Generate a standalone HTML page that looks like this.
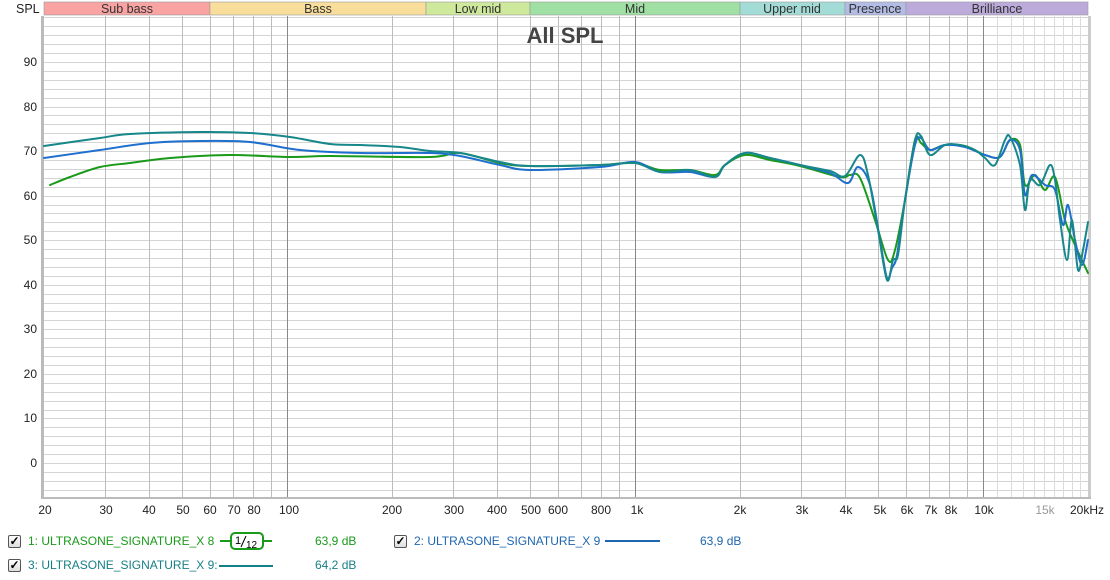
<!DOCTYPE html>
<html><head><meta charset="utf-8"><style>
body{margin:0;background:#fff;width:1110px;height:580px;overflow:hidden;font-family:"Liberation Sans",sans-serif;}
svg{position:absolute;left:0;top:0}
.lg{position:absolute;font-size:12px;white-space:nowrap}
.cb{position:absolute;width:11px;height:11px;border:1px solid #555;background:linear-gradient(#fff,#ddd);border-radius:2px;font-size:12px;font-weight:bold;line-height:11px;text-align:center;color:#000}
</style></head><body>
<svg id="s" width="1110" height="580" font-family="Liberation Sans, sans-serif">
<g id="bands" font-size="12.5" fill="#333">
<rect x="44" y="2" width="166" height="13" fill="#f9a3a3" stroke="#999" stroke-width="0.6"/>
<rect x="210" y="2" width="216" height="13" fill="#f8de9a" stroke="#999" stroke-width="0.6"/>
<rect x="426" y="2" width="104" height="13" fill="#cfe99c" stroke="#999" stroke-width="0.6"/>
<rect x="530" y="2" width="210" height="13" fill="#a0e0a4" stroke="#999" stroke-width="0.6"/>
<rect x="740" y="2" width="105" height="13" fill="#a3dcd6" stroke="#999" stroke-width="0.6"/>
<rect x="845" y="2" width="61" height="13" fill="#b2bce4" stroke="#999" stroke-width="0.6"/>
<rect x="906" y="2" width="182" height="13" fill="#bcaadb" stroke="#999" stroke-width="0.6"/>
<text x="127" y="13" text-anchor="middle">Sub bass</text>
<text x="318" y="13" text-anchor="middle">Bass</text>
<text x="478" y="13" text-anchor="middle">Low mid</text>
<text x="635" y="13" text-anchor="middle">Mid</text>
<text x="792" y="13" text-anchor="middle">Upper mid</text>
<text x="875" y="13" text-anchor="middle">Presence</text>
<text x="997" y="13" text-anchor="middle">Brilliance</text>
</g>
<text x="16" y="13" font-size="12.5" fill="#222">SPL</text>
<rect x="41" y="16" width="3" height="482" fill="#bbb"/>
<rect x="1088" y="16" width="3" height="482" fill="#ccc"/>
<rect x="41" y="497" width="1050" height="2" fill="#bbb"/>
<g id="grid"></g>
<g font-size="12" fill="#222" text-anchor="end">
<text x="37" y="66">90</text><text x="37" y="111">80</text><text x="37" y="155">70</text><text x="37" y="200">60</text><text x="37" y="244">50</text><text x="37" y="289">40</text><text x="37" y="333">30</text><text x="37" y="378">20</text><text x="37" y="422">10</text><text x="37" y="467">0</text>
</g>
<g font-size="12" fill="#222" text-anchor="middle">
<text x="45" y="514">20</text><text x="106" y="514">30</text><text x="149" y="514">40</text><text x="183" y="514">50</text><text x="210" y="514">60</text><text x="234" y="514">70</text><text x="254" y="514">80</text><text x="289" y="514">100</text><text x="392" y="514">200</text><text x="454" y="514">300</text><text x="497" y="514">400</text><text x="531" y="514">500</text><text x="558" y="514">600</text><text x="601" y="514">800</text><text x="637" y="514">1k</text><text x="740" y="514">2k</text><text x="802" y="514">3k</text><text x="846" y="514">4k</text><text x="880" y="514">5k</text><text x="907" y="514">6k</text><text x="931" y="514">7k</text><text x="951" y="514">8k</text><text x="984" y="514">10k</text><text x="1045" y="514" fill="#999">15k</text><text x="1087" y="514">20kHz</text>
</g>
<text x="565" y="43" font-size="22" font-weight="bold" fill="#444" text-anchor="middle">All SPL</text>
<g id="curves" fill="none" stroke-width="2" stroke-linejoin="round" stroke-linecap="round"></g>
<line x1="220" y1="541" x2="272" y2="541" stroke="#1a9a1a" stroke-width="2"/>
<rect x="231" y="533" width="32" height="16" rx="4" fill="#fff" stroke="#1a9a1a" stroke-width="2"/>
<text x="235" y="544" font-size="11" fill="#000">1</text><line x1="246" y1="536" x2="241" y2="547" stroke="#000" stroke-width="1"/><text x="246" y="548" font-size="10" fill="#000">12</text>
<line x1="605" y1="541" x2="660" y2="541" stroke="#1f66b0" stroke-width="2"/>
<line x1="219" y1="566" x2="273" y2="566" stroke="#177f86" stroke-width="2"/>
</svg>
<div class="cb" style="left:8px;top:535px">✓</div>
<div class="lg" style="left:28px;top:534px;color:#1a9a1a">1: ULTRASONE_SIGNATURE_X 8</div>
<div class="lg" style="left:315px;top:534px;color:#1a9a1a">63,9 dB</div>
<div class="cb" style="left:394px;top:535px">✓</div>
<div class="lg" style="left:414px;top:534px;color:#1f66b0">2: ULTRASONE_SIGNATURE_X 9</div>
<div class="lg" style="left:700px;top:534px;color:#1f66b0">63,9 dB</div>
<div class="cb" style="left:8px;top:559px">✓</div>
<div class="lg" style="left:28px;top:558px;color:#177f86">3: ULTRASONE_SIGNATURE_X 9:</div>
<div class="lg" style="left:315px;top:558px;color:#177f86">64,2 dB</div>
<script>
var ns="http://www.w3.org/2000/svg",g=document.getElementById("grid");
function L(x1,y1,x2,y2,c){var l=document.createElementNS(ns,"line");l.setAttribute("x1",x1);l.setAttribute("y1",y1);l.setAttribute("x2",x2);l.setAttribute("y2",y2);l.setAttribute("stroke",c);l.setAttribute("stroke-width",1);g.appendChild(l);}
for(var d=-8;d<=100;d+=2){var y=Math.round(463-4.456*d)+0.5;if(y>16&&y<497)L(44,y,1088,y,"#d4d4d4");}
function X(f){return 287+348*Math.log10(f/100);}
var fs=[];for(var f=30;f<100;f+=10)fs.push(f);for(f=200;f<1000;f+=100)fs.push(f);for(f=2000;f<10000;f+=1000)fs.push(f);for(f=11000;f<20000;f+=1000)fs.push(f);
fs.forEach(function(f){var x=Math.round(X(f))+0.5;L(x,16,x,497,f>10000?"#dcdcdc":"#bdbdbd");});
[100,1000,10000].forEach(function(f){var x=Math.round(X(f))+0.5;L(x,16,x,497,"#888");});
function path(p){var s="M"+p[0][0]+","+p[0][1];for(var i=0;i<p.length-1;i++){var a=p[Math.max(i-1,0)],b=p[i],c=p[i+1],d=p[Math.min(i+2,p.length-1)];s+="C"+(b[0]+(c[0]-a[0])/6)+","+(b[1]+(c[1]-a[1])/6)+" "+(c[0]-(d[0]-b[0])/6)+","+(c[1]-(d[1]-b[1])/6)+" "+c[0]+","+c[1];}return s;}
var cv=document.getElementById("curves");
function C(pts,col){var p=document.createElementNS(ns,"path");p.setAttribute("d",path(pts));p.setAttribute("stroke",col);cv.appendChild(p);}
C([[50,185],[70,177],[100,167],[130,163],[170,158],[230,155],[290,157],[330,156],[430,157],[460,153],[500,163],[530,166],[600,165],[635,163],[660,170],[690,170],[715,175],[725,165],[745,155],[770,160],[800,166],[840,177],[850,175],[860,178],[875,220],[888,260],[895,250],[905,200],[915,140],[921,143],[930,150],[945,145],[965,146],[985,155],[1000,157],[1010,140],[1020,145],[1025,185],[1035,175],[1045,190],[1055,177],[1065,220],[1075,245],[1088,273]],"#1a9a1a");
C([[44,158],[100,150],[150,143],[200,141],[250,142],[300,150],[360,153],[430,153],[460,156],[500,165],[530,170],[600,167],[635,162],[660,172],[690,172],[715,177],[725,165],[745,153],[770,158],[800,165],[830,173],[848,183],[858,167],[870,185],[880,240],[887,278],[892,268],[897,255],[905,200],[915,145],[921,138],[930,150],[945,145],[965,147],[985,155],[1000,157],[1010,140],[1020,150],[1025,195],[1032,175],[1045,185],[1055,190],[1063,225],[1068,205],[1075,240],[1082,265],[1088,240]],"#1f6fcf");
C([[44,146],[100,138],[130,134],[200,132],[250,133],[290,137],[330,144],[360,145],[400,147],[430,151],[460,153],[500,162],[530,166],[600,165],[635,163],[660,172],[690,170],[715,177],[725,165],[745,153],[770,158],[800,165],[830,171],[845,176],[860,155],[868,175],[878,230],[887,280],[893,260],[898,255],[905,200],[915,140],[921,136],[930,155],[945,145],[960,145],[975,150],[985,158],[995,165],[1005,140],[1010,137],[1020,165],[1025,210],[1030,180],[1040,185],[1050,165],[1055,180],[1060,220],[1067,260],[1072,220],[1078,270],[1083,250],[1088,222]],"#17878a");
</script>
</body></html>
